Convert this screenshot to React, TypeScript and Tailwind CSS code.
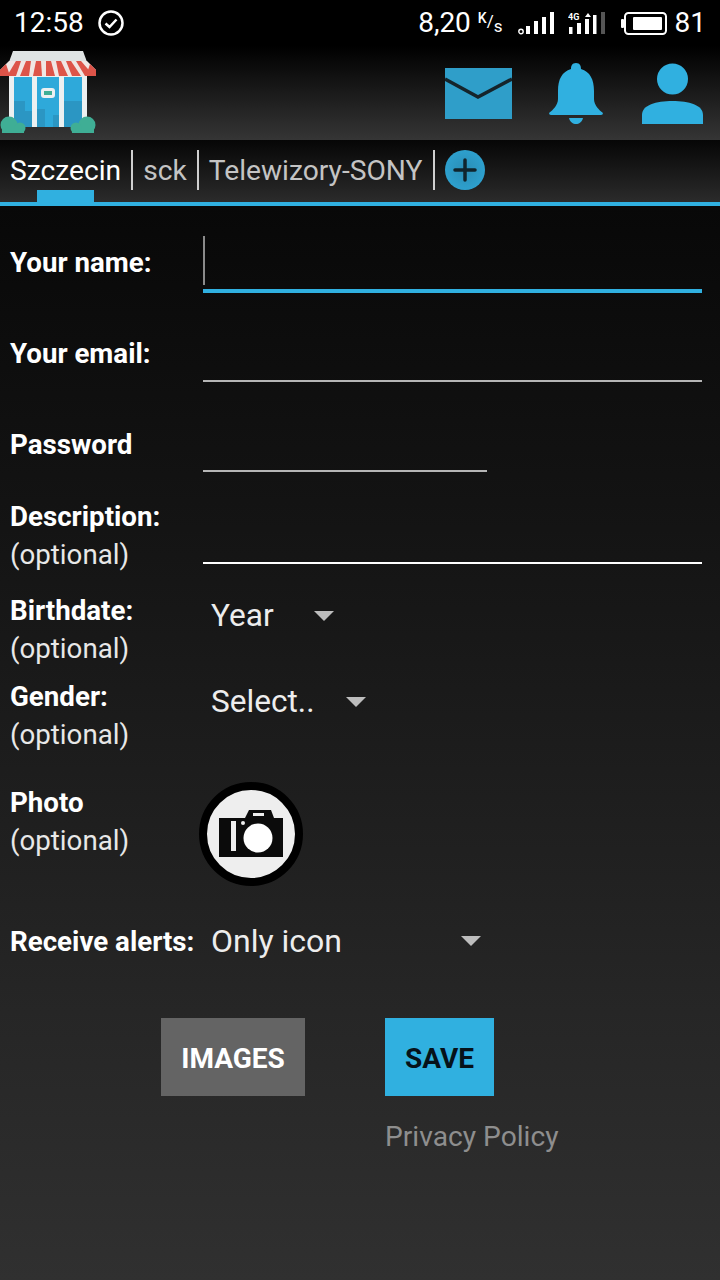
const BLUE = "#30b0e0";

function StoreLogo() {
  const stripes = [0, 1, 2, 3, 4, 5, 6];
  return (
    <svg width="96" height="82" viewBox="0 0 96 82">
      <path d="M9 11 L13 0 H83 L87 11 Z" fill="#dfe3e3" />
      <rect x="9" y="20" width="78" height="56" fill="#ecf0f1" />
      <rect x="14" y="26" width="18" height="50" fill="#2ea9da" />
      <rect x="37" y="26" width="22" height="50" fill="#2ea9da" />
      <rect x="64" y="26" width="18" height="50" fill="#2ea9da" />
      <path d="M14 50 H25 V60 H32 V76 H14 Z" fill="#2b96c3" />
      <path d="M64 50 H82 V76 H64 Z" fill="#2b96c3" />
      <path d="M37 58 H45 V76 H37 Z M53 64 H59 V76 H53 Z" fill="#2b96c3" />
      <rect x="41" y="37" width="14" height="10" rx="3" fill="#ecf0f1" />
      <rect x="44" y="40" width="8" height="4" fill="#3fae95" />
      <path d="M9 10 H87 L96 19 V25 H0 V19 Z" fill="#f0e6e4" />
      {stripes.map((i) => (
        <path
          key={i}
          d={`M${16 + i * 10} 10 L${7 + i * 13} 25 H${16 + i * 13} L${21 + i * 10} 10 Z`}
          fill="#dd5449"
        />
      ))}
      <path d="M0 19 L6 13 L10 25 H0 Z" fill="#dd5449" />
      <path d="M96 19 L90 13 L86 25 H96 Z" fill="#dd5449" />
      <circle cx="9" cy="74" r="8.5" fill="#3fae95" />
      <circle cx="20" cy="77" r="5.5" fill="#3fae95" />
      <rect x="2" y="78" width="22" height="4" fill="#3fae95" />
      <circle cx="87" cy="74" r="8.5" fill="#3fae95" />
      <circle cx="76" cy="77" r="5.5" fill="#3fae95" />
      <rect x="72" y="78" width="22" height="4" fill="#3fae95" />
    </svg>
  );
}

function MailIcon() {
  return (
    <svg width="67" height="51" viewBox="0 0 67 51">
      <rect width="67" height="51" fill="#2f9ec9" />
      <path d="M0 11 L33 29 L67 11" stroke="#15242b" strokeWidth="3.5" fill="none" />
    </svg>
  );
}

function BellIcon() {
  return (
    <svg width="54" height="62" viewBox="0 0 54 62" fill={BLUE}>
      <path d="M27 0 C31 0 32 3 32 6 C41 9 45 16 45 28 V36 C45 42 50 47 54 50 Q54 52 52 52 H2 Q0 52 0 50 C4 47 9 42 9 36 V28 C9 16 13 9 22 6 C22 3 23 0 27 0 Z" />
      <path d="M20 55 H34 C33 59 30 61 27 61 C24 61 21 59 20 55 Z" />
    </svg>
  );
}

function UserIcon() {
  return (
    <svg width="61" height="62" viewBox="0 0 61 62" fill={BLUE}>
      <circle cx="30.5" cy="16" r="15.5" />
      <path d="M0 61 V52 C0 42 14 38 30.5 38 C47 38 61 42 61 52 V61 Z" />
    </svg>
  );
}

function StatusIcons() {
  return (
    <div className="flex items-center">
      <span className="text-[28px] leading-none text-white">8,20</span>
      <span className="ml-[7px] flex h-[24px] items-start text-[17px] leading-[20px] text-white">
        <span className="text-[14px] font-medium leading-[14px]">K</span>
        <span>/</span>
        <span className="mt-[5px]">s</span>
      </span>
      {/* signal, sim 1 */}
      <svg className="ml-[15px]" width="37" height="23" viewBox="0 0 37 23" fill="#fff">
        <circle cx="3" cy="19.5" r="2.2" fill="none" stroke="#fff" strokeWidth="1.4" />
        <rect x="8" y="14" width="4" height="8" />
        <rect x="16" y="9" width="4" height="13" />
        <rect x="24" y="5" width="4" height="17" />
        <rect x="32" y="0" width="4" height="22" />
      </svg>
      {/* signal, sim 2 */}
      <svg className="ml-[13px]" width="37" height="23" viewBox="0 0 37 23" fill="#fff">
        <text x="0" y="8" fontSize="9" fontWeight="700" fontFamily="Roboto" fill="#fff">
          4G
        </text>
        <path d="M17 5 L20 1 L23 5 Z" />
        <rect x="1" y="15" width="3.5" height="7" />
        <rect x="9" y="11" width="4" height="11" />
        <rect x="17" y="7" width="4" height="15" />
        <rect x="25" y="3" width="3.5" height="19" />
        <rect x="33" y="0" width="4" height="22" fill="#555" />
      </svg>
      {/* battery */}
      <svg className="ml-[16px]" width="46" height="23" viewBox="0 0 46 23">
        <rect x="0" y="7" width="3" height="9" rx="1" fill="#fff" />
        <rect x="4" y="1" width="41" height="21" rx="3.5" fill="none" stroke="#fff" strokeWidth="2" />
        <rect x="12" y="5" width="29" height="13" rx="1" fill="#fff" />
      </svg>
      <span className="ml-[8px] mr-[14px] text-[28px] leading-none text-white">81</span>
    </div>
  );
}

function Tab({ label, active }: { label: string; active?: boolean }) {
  return (
    <div className="flex h-[40px] items-center border-r-2 border-[#cfcfcf] pr-[10px]">
      <span className={`pt-[2px] text-[28.2px] leading-none ${active ? "text-white" : "text-[#c4c4c4]"}`}>{label}</span>
    </div>
  );
}

function Label({ title, optional }: { title: string; optional?: boolean }) {
  return (
    <div className="w-[203px] shrink-0 pl-[10px]">
      <div className="text-[27.7px] font-bold leading-[38px] text-white">{title}</div>
      {optional && <div className="text-[27.7px] leading-[38px] text-[#e8e8e8]">(optional)</div>}
    </div>
  );
}

function Caret() {
  return <span className="block h-0 w-0 border-x-[10px] border-t-[10px] border-x-transparent border-t-[#bdbdbd]" />;
}

export default function App() {
  return (
    <div className="flex h-[1280px] w-[720px] flex-col overflow-hidden" style={{ fontFamily: "Roboto, sans-serif" }}>
      {/* status bar */}
      <div className="flex h-[46px] shrink-0 items-center justify-between bg-black">
        <div className="flex items-center pl-[14px]">
          <span className="text-[28px] leading-none text-white">12:58</span>
          <svg className="ml-[14px]" width="26" height="26" viewBox="0 0 26 26" fill="none" stroke="#fff">
            <circle cx="13" cy="13" r="11.5" strokeWidth="2.5" />
            <path d="M7.5 13.5 L11.5 17 L18.5 9.5" strokeWidth="2.5" />
          </svg>
        </div>
        <StatusIcons />
      </div>

      {/* app header */}
      <div className="flex h-[94px] shrink-0 items-center justify-between bg-[linear-gradient(#000,#353535)]">
        <div className="mt-[-2px]">
          <StoreLogo />
        </div>
        <div className="flex items-center pt-[1px]">
          <MailIcon />
          <div className="ml-[37px]">
            <BellIcon />
          </div>
          <div className="ml-[39px] mr-[17px]">
            <UserIcon />
          </div>
        </div>
      </div>

      {/* tab strip */}
      <div className="relative flex h-[66px] shrink-0 items-start gap-[10px] border-b-[4px] border-[#30b0e0] bg-[linear-gradient(#060606,#2b2b2b)] pl-[10px] pt-[10px]">
        <Tab label="Szczecin" active />
        <Tab label="sck" />
        <Tab label="Telewizory-SONY" />
        <div className="flex h-[40px] w-[40px] items-center justify-center rounded-full bg-[radial-gradient(#2a8db5,#2fa8d8)]">
          <svg width="26" height="26" viewBox="0 0 26 26" stroke="#10242c" strokeWidth="3.5" strokeLinecap="round">
            <path d="M13 3 V23 M3 13 H23" />
          </svg>
        </div>
        <span className="absolute bottom-0 left-[37px] h-[12px] w-[57px] bg-[#30b0e0]" />
      </div>

      {/* profile form */}
      <div className="flex flex-1 flex-col bg-[linear-gradient(#080808,#303030)]">
        <div className="flex h-[87px] pr-[18px]">
          <div className="pt-[38px]">
            <Label title="Your name:" />
          </div>
          <div className="mt-[30px] flex-1 border-b-[4px] border-[#30b0e0]">
            <div className="h-[49px] w-[2px] bg-[#8a8a8a]" />
          </div>
        </div>
        <div className="flex h-[89px] pr-[18px]">
          <div className="pt-[42px]">
            <Label title="Your email:" />
          </div>
          <div className="flex-1 border-b-2 border-[#b5b5b5]" />
        </div>
        <div className="flex h-[90px]">
          <div className="pt-[44px]">
            <Label title="Password" />
          </div>
          <div className="w-[284px] border-b-2 border-[#b5b5b5]" />
        </div>
        <div className="flex h-[92px] pr-[18px]">
          <div className="pt-[26px]">
            <Label title="Description:" optional />
          </div>
          <div className="flex-1 border-b-2 border-white" />
        </div>
        <div className="flex h-[86px] pt-[28px]">
          <Label title="Birthdate:" optional />
          <div className="flex h-[48px] items-center pl-[8px]">
            <span className="text-[31.6px] leading-none text-[#ededed]">Year</span>
            <span className="ml-[40px]">
              <Caret />
            </span>
          </div>
        </div>
        <div className="flex h-[131px] pt-[28px]">
          <Label title="Gender:" optional />
          <div className="flex h-[48px] items-center pl-[8px]">
            <span className="text-[31.6px] leading-none text-[#ededed]">Select..</span>
            <span className="ml-[32px]">
              <Caret />
            </span>
          </div>
        </div>
        <div className="flex h-[141px]">
          <div className="pt-[3px]">
            <Label title="Photo" optional />
          </div>
          <div className="ml-[-4px] mt-[1px] flex h-[104px] w-[104px] items-center justify-center rounded-full border-[8px] border-black bg-[#eeeeee]">
            <svg width="66" height="48" viewBox="0 0 66 48" fill="#0b0b0b">
              <path d="M1 8 H27 L31 0 H53 L56 8 H65 V47 H1 Z" />
              <rect x="13" y="11" width="5" height="30" fill="#eee" />
              <circle cx="40" cy="28" r="14.5" fill="#fff" />
              <circle cx="25" cy="13" r="2" fill="#eee" />
              <rect x="35" y="3" width="11" height="3" fill="#eee" />
            </svg>
          </div>
        </div>

        <div className="flex h-[38px] items-center">
          <div className="w-[211px] shrink-0 pl-[10px] pt-[2px] text-[27.7px] font-bold text-white">Receive alerts:</div>
          <span className="text-[32px] leading-none text-[#ededed]">Only icon</span>
          <span className="ml-[119px]">
            <Caret />
          </span>
        </div>

        {/* actions */}
        <div className="mt-[58px] flex">
          <button className="ml-[161px] h-[78px] w-[144px] bg-[#646464] pt-[4px] text-[28px] font-bold text-white">
            IMAGES
          </button>
          <button className="ml-[80px] h-[78px] w-[109px] bg-[#30b0e0] pt-[4px] text-[28px] font-bold text-[#06121a]">
            SAVE
          </button>
        </div>
        <div className="mt-[23px] pl-[385px] text-[28.2px] leading-[36px] text-[#8e8e8e]">Privacy Policy</div>
      </div>
    </div>
  );
}
